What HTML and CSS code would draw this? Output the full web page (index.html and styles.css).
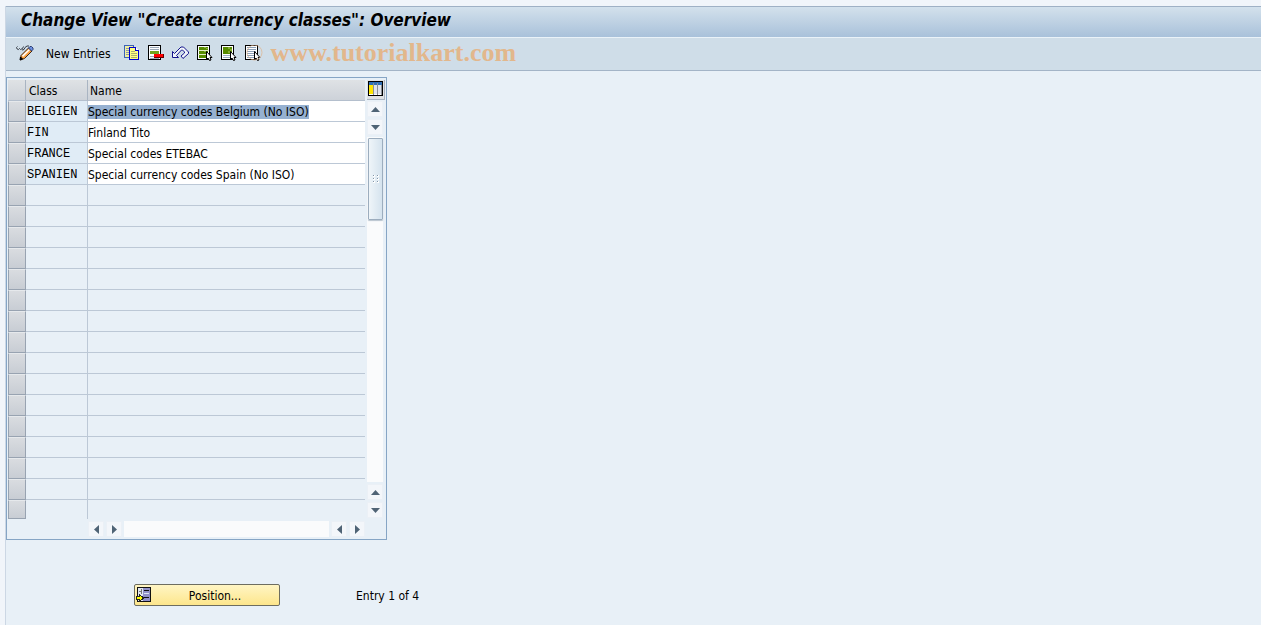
FILE: index.html
```html
<!DOCTYPE html>
<html lang="en">
<head>
    <meta charset="UTF-8">
    <meta name="viewport" content="width=device-width, initial-scale=1.0">
    <title>Change View "Create currency classes": Overview</title>
    <link rel="stylesheet" href="styles.css">
</head>
<body>
    <div class="window">
        <header class="title-bar">
            <h1>Change View "Create currency classes": Overview</h1>
        </header>

        <div class="toolbar">
            <button type="button" class="tool" aria-label="Display / Change">
                <svg width="18" height="16" viewBox="0 0 18 16">
                    <path d="M3.500 3.500a1.500 1.500 0 1 1-2-2M3.500 3.500l1 1 2-1 1-2M6 5l2-.500 1-2 2-1.500h2" fill="none" stroke="#333a44"/>
                    <path d="M5 10.500l7.500-7.500 3.500 3-7.500 7.500-4 1.500z" fill="#f8a040" stroke="#402818"/>
                    <path d="M6 10.500l7-6.500 1 1-7 7z" fill="#fff"/>
                    <path d="M12.500 3l1.500-1.500h1.500l1.500 1.500v1.500l-1.500 1.500z" fill="#6c90e0" stroke="#2c3c70"/>
                    <path d="M4 15l.500-3 2 2z" fill="#000" stroke="#000"/>
                </svg>
            </button>
            <button type="button" class="tool new-entries">New Entries</button>
            <button type="button" class="tool" aria-label="Copy">
                <svg width="16" height="16" viewBox="0 0 16 16" shape-rendering="crispEdges">
                    <path d="M0.500 0.500h9v12h-9z" fill="#f1f0a0" stroke="#3c62b8"/>
                    <path d="M2 3.500h3M2 5.500h3M2 7.500h3M2 9.500h3" stroke="#8a98a8"/>
                    <path d="M5.500 2.500h6l3 3v9h-9z" fill="#ffff80" stroke="#0000d0"/>
                    <path d="M11.500 2.500v3h3" fill="#fff" stroke="#0000d0"/>
                    <path d="M7 6.500h4M7 8.500h6M7 10.500h6M7 12.500h6" stroke="#b0b070"/>
                </svg>
            </button>
            <button type="button" class="tool" aria-label="Delete">
                <svg width="16" height="16" viewBox="0 0 16 16" shape-rendering="crispEdges">
                    <path d="M0.500 0.500h12v14h-12z" fill="#fff" stroke="#000"/>
                    <path d="M2 2.500h9M2 4.500h9M2 11.500h4M2 13.500h9" stroke="#9aa8b8"/>
                    <path d="M2 6h9v3H2z" fill="#73a51c"/>
                    <path d="M6 9h10v4H6z" fill="#600"/>
                    <path d="M6 9h9v3H6z" fill="#f00"/>
                </svg>
            </button>
            <button type="button" class="tool" aria-label="Undo">
                <svg width="17" height="16" viewBox="0 0 17 16">
                    <path d="M0.500 6.500v6h6l-2-2 5-5.500h1l2 2v1l-3.500 3 2 2.500 5.500-5v-1.500l-5-5h-2.500l-6.500 6.500z" fill="#f2f6fa" stroke="#14148c"/>
                </svg>
            </button>
            <button type="button" class="tool" aria-label="Select All">
                <svg width="16" height="16" viewBox="0 0 16 16">
                    <g shape-rendering="crispEdges">
                        <path d="M0.500 0.500h12v14h-12z" fill="#fff" stroke="#000"/>
                        <path d="M2 2h9v3H2zM2 6h9v3H2zM2 10h9v3H2z" fill="#578c00"/>
                        <path d="M1 5.500h11M1 9.500h11" stroke="#e4efc8"/>
                        <path d="M7 2h2v1H7zM9 3h2v1H9zM7 6h2v1H7zM9 7h2v1H9z" fill="#8db540"/>
                    </g>
                    <path d="M9.500 6.500v8l1.500-1.500 1.500 2.500 1.500-.500-1-2.500h2z" fill="#fff" stroke="#000"/>
                </svg>
            </button>
            <button type="button" class="tool" aria-label="Select Block">
                <svg width="16" height="16" viewBox="0 0 16 16">
                    <g shape-rendering="crispEdges">
                        <path d="M0.500 0.500h12v14h-12z" fill="#fff" stroke="#000"/>
                        <path d="M2 2h9v7H2z" fill="#578c00"/>
                        <path d="M7 2h2v2H7zM9 4h2v2H9zM7 6h2v2H7z" fill="#86ad32"/>
                        <path d="M2 10.500h7M2 12.500h7" stroke="#9ab0c4"/>
                    </g>
                    <path d="M9.500 6.500v8l1.500-1.500 1.500 2.500 1.500-.500-1-2.500h2z" fill="#fff" stroke="#000"/>
                </svg>
            </button>
            <button type="button" class="tool" aria-label="Deselect All">
                <svg width="18" height="16" viewBox="0 0 18 16">
                    <g shape-rendering="crispEdges">
                        <path d="M0.500 0.500h12v14h-12z" fill="#fff" stroke="#000"/>
                        <path d="M2 2.500h9M2 4.500h9M2 6.500h9M2 8.500h7M2 10.500h7M2 12.500h7" stroke="#8ca0b8"/>
                    </g>
                    <path d="M9.500 6.500v8l1.500-1.500 1.500 2.500 1.500-.500-1-2.500h2z" fill="#fff" stroke="#000"/>
                    <circle cx="9.500" cy="7.500" r="7.500" fill="none" stroke="#e0b48c" stroke-opacity=".7"/>
                </svg>
            </button>
            <span class="site">www.tutorialkart.com</span>
        </div>

        <main>
            <div class="grid">
                <table>
                    <colgroup>
                        <col class="col-select">
                        <col class="col-class">
                        <col class="col-name">
                    </colgroup>
                    <thead>
                        <tr>
                            <th></th>
                            <th>Class</th>
                            <th>Name</th>
                        </tr>
                    </thead>
                    <tbody id="rows"></tbody>
                </table>

                <div class="side">
                    <button type="button" class="config" aria-label="Table settings">
                        <svg width="15" height="15" viewBox="0 0 15 15" shape-rendering="crispEdges">
                            <path d="M0 0h15v15H0z" fill="#000"/>
                            <path d="M1 1h13v13H1z" fill="#fff"/>
                            <path d="M1 1h13v3H1z" fill="#2f6fb4"/>
                            <path d="M1 4h4v9H1z" fill="#ffe600"/>
                            <path d="M6 4h3v9H6zM10 4h3v9h-3z" fill="#dfe3ea"/>
                            <path d="M5.500 2v12M9.500 2v12M13.500 4v10" stroke="#8a8f98"/>
                        </svg>
                    </button>
                    <div class="scroll vertical">
                        <button type="button" class="arrow" aria-label="Up"><svg width="9" height="5" viewBox="0 0 9 5"><path d="M0 5L4.500 0 9 5z"/></svg></button>
                        <button type="button" class="arrow" aria-label="Down"><svg width="9" height="5" viewBox="0 0 9 5"><path d="M0 0L4.500 5 9 0z"/></svg></button>
                        <div class="track">
                            <div class="thumb">
                                <svg width="6" height="8" viewBox="0 0 6 8" shape-rendering="crispEdges">
                                    <path d="M0 0h2v2H0zM4 0h2v2H4zM0 3h2v2H0zM4 3h2v2H4zM0 6h2v2H0zM4 6h2v2H4z" fill="#fff"/>
                                    <path d="M0 0h1v1H0zM4 0h1v1H4zM0 3h1v1H0zM4 3h1v1H4zM0 6h1v1H0zM4 6h1v1H4z" fill="#8496a8"/>
                                </svg>
                            </div>
                        </div>
                        <button type="button" class="arrow" aria-label="Up"><svg width="9" height="5" viewBox="0 0 9 5"><path d="M0 5L4.500 0 9 5z"/></svg></button>
                        <button type="button" class="arrow" aria-label="Down"><svg width="9" height="5" viewBox="0 0 9 5"><path d="M0 0L4.500 5 9 0z"/></svg></button>
                    </div>
                </div>

                <div class="scroll horizontal">
                    <button type="button" class="arrow" aria-label="Left"><svg width="5" height="9" viewBox="0 0 5 9"><path d="M5 0L0 4.500 5 9z"/></svg></button>
                    <button type="button" class="arrow" aria-label="Right"><svg width="5" height="9" viewBox="0 0 5 9"><path d="M0 0L5 4.500 0 9z"/></svg></button>
                    <div class="track"></div>
                    <button type="button" class="arrow" aria-label="Left"><svg width="5" height="9" viewBox="0 0 5 9"><path d="M5 0L0 4.500 5 9z"/></svg></button>
                    <button type="button" class="arrow" aria-label="Right"><svg width="5" height="9" viewBox="0 0 5 9"><path d="M0 0L5 4.500 0 9z"/></svg></button>
                </div>
            </div>

            <div class="footer">
                <button type="button" class="position">
                    <svg width="16" height="16" viewBox="0 0 16 16" shape-rendering="crispEdges">
                        <path d="M1.500 0.500h13v14h-13z" fill="#dfe6f2" stroke="#111"/>
                        <path d="M7 1h7v13H7z" fill="#9090c8"/>
                        <path d="M8 3.500h5M8 10.500h5" stroke="#111"/>
                        <path d="M8 6.500h5" stroke="#dfe6f2"/>
                        <path d="M3 4.500h3M5.500 2v5" stroke="#777"/>
                        <path d="M0.500 9.500h3v-2l4 3.500-4 3.500v-2h-3z" fill="#ff0" stroke="#222"/>
                    </svg>
                    <span>Position...</span>
                </button>
                <span class="entry">Entry 1 of 4</span>
            </div>
        </main>
    </div>

    <script>
        const classes = [
            ['BELGIEN', 'Special currency codes Belgium (No ISO)'],
            ['FIN', 'Finland Tito'],
            ['FRANCE', 'Special codes ETEBAC'],
            ['SPANIEN', 'Special currency codes Spain (No ISO)']
        ];
        const rowCount = 20;
        const rows = document.getElementById('rows');

        for (let i = 0; i < rowCount; i++) {
            const entry = classes[i];
            const row = rows.insertRow();
            row.insertCell().innerHTML = `<button type="button" class="selector" aria-label="Select row ${i + 1}"></button>`;
            const key = row.insertCell();
            const name = row.insertCell();
            if (entry) {
                row.className = 'filled';
                key.textContent = entry[0];
                name.innerHTML = `<input type="text" aria-label="Name of ${entry[0]}" value="${entry[1]}">`;
            }
        }

        const first = rows.querySelector('input');
        first.focus();
        first.select();
    </script>
</body>
</html>
```
FILE: styles.css
```css
* {
    box-sizing: border-box;
}
body {
    margin: 0;
    padding: 6px 0 0 5px;
    background: #f1f5fa;
    color: #000;
    font-family: "DejaVu Sans Condensed", Tahoma, "DejaVu Sans", sans-serif;
    font-size: 12px;
    line-height: 14px;
}
button, input {
    margin: 0;
    padding: 0;
    border: none;
    background: none;
    color: inherit;
    font: inherit;
}
svg {
    display: block;
}
.window {
    min-height: calc(100vh - 6px);
    border-left: 1px solid #ccd7e4;
    background: #e8f0f7;
}
.title-bar {
    height: 31px;
    padding: 3px 15px;
    border-top: 1px solid #9fb1c5;
    background: linear-gradient(to bottom, #d3e1ec, #a9c1da);
}
h1 {
    margin: 0;
    font-size: 17px;
    font-style: italic;
    line-height: 20px;
}
.toolbar {
    display: flex;
    align-items: center;
    gap: 8px;
    height: 34px;
    padding: 0 10px 2px;
    border-top: 1px solid #eaf2f8;
    border-bottom: 1px solid #a3b4c7;
    background: #cfdde8;
}
.new-entries {
    margin: 0 5px 0 4px;
    padding-top: 1px;
}
.site {
    color: #e2b78c;
    font-family: "Liberation Serif", serif;
    font-size: 26px;
    font-weight: bold;
    line-height: 28px;
}
.grid {
    display: grid;
    grid-template-columns: 357px 18px;
    gap: 2px;
    width: max-content;
    margin-top: 6px;
    padding: 2px 1px;
    border: 1px solid #86a5c5;
}
table {
    width: 100%;
    border-collapse: separate;
    border-spacing: 0;
    table-layout: fixed;
}
.col-select {
    width: 18px;
}
.col-class {
    width: 62px;
}
th {
    height: 21px;
    padding: 2px 3px 0;
    border-right: 1px solid #a9b4c2;
    border-bottom: 1px solid #b4bfcd;
    background: linear-gradient(to bottom, #dfe2e5, #cdd2d9);
    font-weight: normal;
    text-align: left;
}
th:last-child {
    padding-left: 2px;
    border-right: none;
}
td {
    height: 21px;
    padding: 2px 1px 0;
    border-right: 1px solid #bcc8d6;
    border-bottom: 1px solid #bcc8d6;
    font-family: "Liberation Mono", "Courier New", monospace;
}
td:first-child {
    padding: 0;
    border: none;
}
td:last-child {
    padding: 0;
    border-right: none;
}
tr:last-child td {
    height: 19px;
    border-bottom: none;
}
.filled td {
    background: #e0ecf6;
}
.filled td:last-child {
    background: #fff;
}
td input {
    display: block;
    width: 100%;
    height: 20px;
    padding-top: 2px;
    outline: none;
    font-family: "DejaVu Sans Condensed", Tahoma, "DejaVu Sans", sans-serif;
}
input::selection {
    background: #96b1d1;
    color: #000;
}
.selector {
    display: block;
    width: 18px;
    height: 21px;
    border: 1px solid #98a3b1;
    border-top-color: #e6e9ec;
    background: linear-gradient(to bottom, #d9dce0, #c8cdd4);
}
tr:last-child .selector {
    height: 19px;
}
.side {
    display: flex;
    flex-direction: column;
}
.config {
    width: 18px;
    height: 20px;
    padding: 0 1px 2px;
    border-right: 1px solid #a9b4c2;
    border-bottom: 1px solid #a9b4c2;
    background: #dfe2e5;
}
.scroll {
    display: flex;
    gap: 2px;
}
.vertical {
    flex: 1;
    flex-direction: column;
    width: 16px;
    margin: 1px 0;
}
.horizontal {
    margin-left: 80px;
}
.arrow {
    display: flex;
    align-items: center;
    justify-content: center;
    width: 16px;
    height: 16px;
    border: 1px solid #ebf0f6;
    background: #f3f6fa;
    fill: #4f6375;
}
.track {
    flex: 1;
    background: #fafbfc;
}
.thumb {
    display: flex;
    align-items: center;
    justify-content: center;
    height: 82px;
    margin: 1px 0 0 1px;
    border: 1px solid #9cadbe;
    border-radius: 1px;
    background: linear-gradient(to right, #eff5f9, #d5e3ee);
    box-shadow: 0 1px 1px #b9c4cf;
}
.footer {
    display: flex;
    align-items: center;
    gap: 76px;
    padding: 44px 128px 16px;
}
.position {
    display: flex;
    align-items: center;
    width: 146px;
    height: 22px;
    padding: 0 1px;
    border: 1px solid #6d6d60;
    border-radius: 2px;
    background: linear-gradient(to bottom, #fff5c4, #fde68c);
}
.position span {
    flex: 1;
    padding-top: 1px;
    text-align: center;
}
.entry {
    padding-top: 1px;
}
```
